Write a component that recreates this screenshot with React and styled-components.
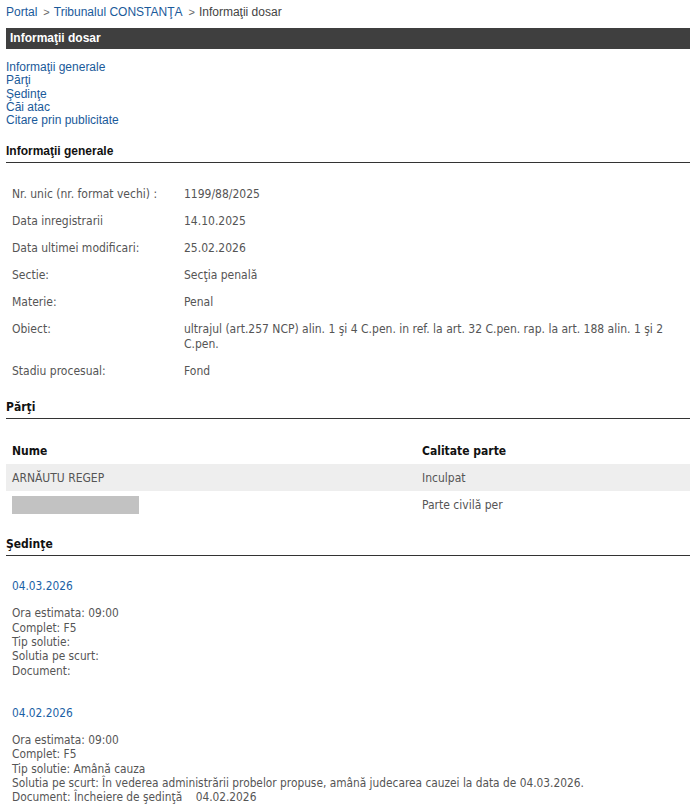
import React from 'react';
import styled, { createGlobalStyle } from 'styled-components';

const GlobalStyle = createGlobalStyle`
  body {
    margin: 0;
    background: #fff;
    font-family: "Liberation Sans", Arial, sans-serif;
    font-size: 12px;
  }
`;

const tahoma = `"DejaVu Sans Condensed", "DejaVu Sans", Verdana, sans-serif`;

const Page = styled.div`
  padding: 4px 7px 0 6px;
`;

const Breadcrumb = styled.div`
  font-size: 12px;
  color: #444;
  line-height: 14px;
  padding-top: 1px;
  a { color: #1a5a9a; text-decoration: none; }
  span.sep { color: #666; margin: 0 4px 0 6px; font-size: 11px; }
`;

const TitleBar = styled.div`
  margin-top: 9px;
  background: #3f3f3f;
  color: #fff;
  font-weight: bold;
  font-size: 12px;
  height: 21px;
  line-height: 21px;
  padding-left: 4px;
`;

const Nav = styled.div`
  margin-top: 12px;
  display: flex;
  flex-direction: column;
  a {
    color: #1a5a9a;
    text-decoration: none;
    line-height: 13.3px;
  }
`;

const SectionHead = styled.div`
  margin-top: ${p => p.$top || 18}px;
  font-weight: bold;
  color: #111;
  font-family: ${p => (p.$tahoma ? tahoma : '"Liberation Sans", Arial, sans-serif')};
  font-size: 12px;
  padding-bottom: 4px;
  border-bottom: 1px solid #333;
  line-height: 14px;
`;

const InfoTable = styled.div`
  margin-top: 24px;
  display: grid;
  grid-template-columns: 172px 1fr;
  row-gap: 12px;
  padding-left: 6px;
  font-family: ${tahoma};
  font-size: 12px;
  color: #555;
  line-height: 15px;
`;

const PartiTable = styled.div`
  margin-top: 18px;
  font-family: ${tahoma};
  font-size: 12px;
`;

const PRow = styled.div`
  display: grid;
  grid-template-columns: 410px 1fr;
  align-items: center;
  height: ${p => p.$h || 27}px;
  padding-left: 6px;
  background: ${p => (p.$shade ? '#eeeeee' : 'transparent')};
  color: ${p => (p.$head ? '#111' : '#555')};
  font-weight: ${p => (p.$head ? 'bold' : 'normal')};
`;

const Redacted = styled.div`
  width: 127px;
  height: 18px;
  background: #c2c2c2;
`;

const Sedinta = styled.div`
  margin-top: ${p => p.$top}px;
  padding-left: 6px;
  font-family: ${tahoma};
  font-size: 11.8px;
  color: #555;
`;

const DateLink = styled.div`
  color: #1a5fa6;
  line-height: 15px;
  margin-bottom: 12px;
`;

const Line = styled.div`
  line-height: 14.3px;
  white-space: pre;
`;

const info = [
  ['Nr. unic (nr. format vechi) :', '1199/88/2025'],
  ['Data inregistrarii', '14.10.2025'],
  ['Data ultimei modificari:', '25.02.2026'],
  ['Sectie:', 'Secţia penală'],
  ['Materie:', 'Penal'],
  ['Obiect:', 'ultrajul (art.257 NCP) alin. 1 şi 4 C.pen. in ref. la art. 32 C.pen. rap. la art. 188 alin. 1 şi 2 C.pen.'],
  ['Stadiu procesual:', 'Fond'],
];

const sedinte = [
  {
    date: '04.03.2026',
    lines: ['Ora estimata: 09:00', 'Complet: F5', 'Tip solutie:', 'Solutia pe scurt:', 'Document:'],
  },
  {
    date: '04.02.2026',
    lines: [
      'Ora estimata: 09:00',
      'Complet: F5',
      'Tip solutie: Amână cauza',
      'Solutia pe scurt: În vederea administrării probelor propuse, amână judecarea cauzei la data de 04.03.2026.',
      'Document: Încheiere de şedinţă    04.02.2026',
    ],
  },
];

export default function App() {
  return (
    <>
      <GlobalStyle />
      <Page>
        <Breadcrumb>
          <a href="#">Portal</a>
          <span className="sep">&gt;</span>
          <a href="#">Tribunalul CONSTANŢA</a>
          <span className="sep">&gt;</span>
          Informaţii dosar
        </Breadcrumb>
        <TitleBar>Informaţii dosar</TitleBar>
        <Nav>
          <a href="#">Informaţii generale</a>
          <a href="#">Părţi</a>
          <a href="#">Şedinţe</a>
          <a href="#">Căi atac</a>
          <a href="#">Citare prin publicitate</a>
        </Nav>

        <SectionHead $top={17}>Informaţii generale</SectionHead>
        <InfoTable>
          {info.map(([k, v]) => (
            <React.Fragment key={k}>
              <div>{k}</div>
              <div>{v}</div>
            </React.Fragment>
          ))}
        </InfoTable>

        <SectionHead $tahoma $top={21}>Părţi</SectionHead>
        <PartiTable>
          <PRow $head>
            <div>Nume</div>
            <div>Calitate parte</div>
          </PRow>
          <PRow $shade>
            <div>ARNĂUTU REGEP</div>
            <div>Inculpat</div>
          </PRow>
          <PRow>
            <Redacted />
            <div>Parte civilă per</div>
          </PRow>
        </PartiTable>

        <SectionHead $tahoma $top={19}>Şedinţe</SectionHead>
        {sedinte.map((s, i) => (
          <Sedinta key={s.date} $top={i === 0 ? 23 : 28}>
            <DateLink>{s.date}</DateLink>
            {s.lines.map(l => (
              <Line key={l}>{l}</Line>
            ))}
          </Sedinta>
        ))}
      </Page>
    </>
  );
}
